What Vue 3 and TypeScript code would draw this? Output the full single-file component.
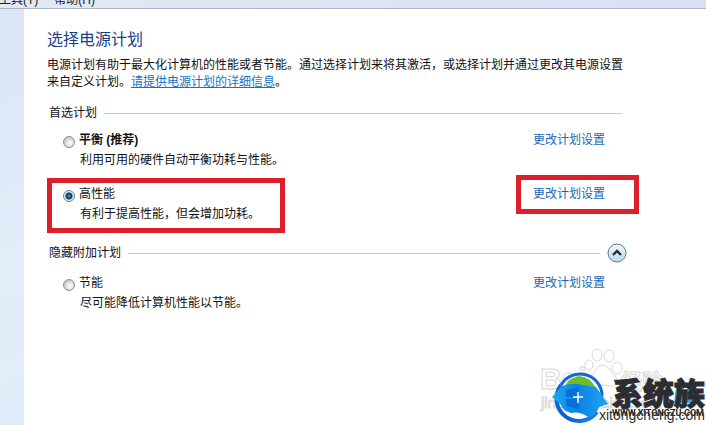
<script setup lang="ts">
import { ref } from 'vue'

interface Plan {
  id: string
  name: string
  detail: string
  strong?: boolean
  marked?: boolean
}

const preferred: Plan[] = [
  { id: 'balanced', name: '平衡 (推荐)', detail: '利用可用的硬件自动平衡功耗与性能。', strong: true },
  { id: 'high', name: '高性能', detail: '有利于提高性能，但会增加功耗。', marked: true },
]
const additional: Plan[] = [{ id: 'saver', name: '节能', detail: '尽可能降低计算机性能以节能。' }]

const selected = ref('high')
const expanded = ref(true)
</script>

<template>
  <div class="window">
    <nav class="menubar">
      <a href="#tools">工具(T)</a>
      <a href="#help">帮助(H)</a>
    </nav>
    <div class="body">
      <aside class="side"></aside>
      <main class="content">
        <h1>选择电源计划</h1>
        <p class="intro">
          电源计划有助于最大化计算机的性能或者节能。通过选择计划来将其激活，或选择计划并通过更改其电源设置来自定义计划。<a href="#details">请提供电源计划的详细信息</a>。
        </p>

        <section>
          <div class="head first"><h2>首选计划</h2><span class="rule"></span></div>
          <div class="plans">
            <div v-for="p in preferred" :key="p.id" class="plan">
              <input :id="p.id" v-model="selected" type="radio" name="plan" :value="p.id" />
              <label :for="p.id" :class="{ strong: p.strong }">{{ p.name }}</label>
              <a class="change" href="#change">更改计划设置</a>
              <p class="detail">{{ p.detail }}</p>
              <template v-if="p.marked">
                <span class="mark mark-plan"></span>
                <span class="mark mark-link"></span>
              </template>
            </div>
          </div>
        </section>

        <section class="extra">
          <div class="head">
            <h2>隐藏附加计划</h2><span class="rule"></span>
            <button type="button" aria-label="隐藏附加计划" @click="expanded = !expanded">
              <svg viewBox="0 0 20 20" width="20" height="20">
                <defs>
                  <linearGradient id="knob" x1="0" y1="0" x2="0" y2="1">
                    <stop offset="0" stop-color="#f4fafd" />
                    <stop offset="0.5" stop-color="#d3e8f3" />
                    <stop offset="1" stop-color="#b4e0f2" />
                  </linearGradient>
                </defs>
                <circle cx="10" cy="10" r="9" fill="url(#knob)" stroke="#59798f" />
                <path d="M6 12 L10 8 L14 12" fill="none" stroke="#202c34" stroke-width="2.4" />
              </svg>
            </button>
          </div>
          <div v-if="expanded" class="plans">
            <div v-for="p in additional" :key="p.id" class="plan">
              <input :id="p.id" v-model="selected" type="radio" name="plan" :value="p.id" />
              <label :for="p.id">{{ p.name }}</label>
              <a class="change" href="#change">更改计划设置</a>
              <p class="detail">{{ p.detail }}</p>
            </div>
          </div>
        </section>
      </main>
    </div>

    <svg class="stamp" viewBox="0 0 170 82" width="170" height="82">
      <defs>
        <linearGradient id="ring" x1="0" y1="0" x2="1" y2="1">
          <stop offset="0" stop-color="#1767d8" />
          <stop offset="0.6" stop-color="#0a5bd4" />
          <stop offset="1" stop-color="#168ff0" />
        </linearGradient>
        <linearGradient id="fish" x1="0" y1="0" x2="1" y2="0">
          <stop offset="0" stop-color="#20a8ee" />
          <stop offset="0.45" stop-color="#0b83e4" />
          <stop offset="1" stop-color="#1fa5f2" />
        </linearGradient>
      </defs>
      <g class="ghost">
        <text x="4" y="46" class="ghost-big">Bai</text>
        <text x="85" y="46" class="ghost-cjk">经验</text>
        <text x="5" y="65" class="ghost-small">jingyan.baidu.com</text>
        <ellipse cx="53" cy="22" rx="4" ry="5" />
        <ellipse cx="61" cy="12" rx="5" ry="6" />
        <ellipse cx="73" cy="13" rx="5" ry="6" />
        <ellipse cx="81" cy="25" rx="5" ry="6" />
        <path d="M66 22 C60 22 60 29 55 33 C49 39 54 45 61 43 C66 42 69 42 74 43 C81 44 84 38 79 33 C73 28 73 22 66 22 Z" />
      </g>
      <path d="M25 42 A22 22 0 1 0 61 69" fill="none" stroke="url(#ring)" stroke-width="4" />
      <path d="M25 42 A22 22 0 0 1 66 51 L65 60" fill="none" stroke="#0f68da" stroke-width="3" />
      <path d="M29 43 Q33 35 43 33 Q54 34 60 45 L45 43 Z" fill="#70bb2b" />
      <path d="M16 54 L26 43 Q37 39 47 42 L60 44 Q67 54 72 61 L63 64 Q60 73 52 74 Q44 68 35 70 Q26 67 25 62 Z" fill="url(#fish)" />
      <path d="M30 47 L43 44 V54 H30 Z M30 56 H43 V66 L30 63 Z" fill="#0870dd" />
      <path d="M37 54 H47 M42 49 V60" stroke="#fff" stroke-width="1.5" fill="none" />
      <path d="M141 37 H148 V60 H138 Z M149 46 H160 L157 60 H148 Z" fill="#3aa5e4" />
      <text x="76" y="62" class="brand">系统族</text>
      <text x="76" y="73" class="site">WWW.XITONGZU.COM</text>
      <text x="63" y="77" class="domain">xitongcheng.com</text>
    </svg>
  </div>
</template>

<style>
body {
  margin: 0;
  background: #fff;
}
html,
body,
#app {
  height: 100%;
}
</style>

<style scoped>
.window {
  position: relative;
  display: flex;
  flex-direction: column;
  min-height: 100%;
  overflow: hidden;
  background: #fff;
  color: #111;
  font: 12px/20px "Liberation Sans", "Noto Sans CJK SC", sans-serif;
}
.menubar {
  display: flex;
  align-items: flex-end;
  gap: 16px;
  height: 8px;
  overflow: hidden;
  border-bottom: 1px solid #abb5c8;
  background: linear-gradient(90deg, #e2e8f4, #dcdff2);
}
.menubar a {
  flex: none;
  margin-bottom: -2px;
  color: #222;
  line-height: 20px;
  text-decoration: none;
}
.menubar a:first-child {
  margin-left: -1px;
}
.body {
  display: flex;
  flex: 1;
}
.side {
  flex: none;
  width: 24px;
  background: linear-gradient(165deg, #dbe5f4, #dfe8f6 30%, #e3ecf9 60%, #e1ecfa);
}
.content {
  flex: 1;
  padding: 19px 79px 24px 23px;
}
h1,
h2,
p {
  margin: 0;
  font-weight: 400;
}
h1 {
  color: #173f8a;
  font-size: 16px;
  line-height: 24px;
}
.intro {
  margin-top: 5px;
  line-height: 17px;
}
.intro a {
  color: #1473c8;
}
.head {
  display: flex;
  align-items: center;
  gap: 7px;
  height: 20px;
  margin-top: 12px;
  padding-left: 2px;
}
h2 {
  font-size: 12px;
}
.rule {
  flex: 1;
  height: 1px;
  background: #c9c9c9;
}
.first {
  padding-right: 5px;
}
.extra .head {
  margin-top: 19px;
}
.head button {
  width: 20px;
  height: 20px;
  padding: 0;
  border: 0;
  background: none;
}
.head svg {
  display: block;
}
.plans {
  display: grid;
  gap: 14px;
  margin-top: 7px;
}
.extra .plans {
  margin-top: 10px;
}
.plan {
  position: relative;
  display: grid;
  grid-template-columns: 12px 1fr 94px;
  column-gap: 4px;
  align-items: center;
  padding-left: 16px;
}
input {
  appearance: none;
  box-sizing: border-box;
  width: 12px;
  height: 12px;
  margin: 4px 0 0;
  border: 1px solid #8e8f8f;
  border-radius: 50%;
  background: radial-gradient(circle at 60% 60%, #f4f4f4 20%, #c9cbcc 65%);
}
input:checked {
  border-color: #6f8190;
  background: radial-gradient(circle, #4fb6dc 0, #14496b 2px, #143f60 3px, #d6e0e6 4px, #eef3f5 5px);
}
.strong {
  font-weight: 700;
}
.change {
  color: #1769b5;
  text-decoration: none;
}
.detail {
  grid-column: 2;
  padding-left: 1px;
}
.mark {
  position: absolute;
  box-sizing: border-box;
  border: 5px solid #dc1f2a;
  pointer-events: none;
}
.mark-plan {
  top: -6px;
  left: 0;
  width: 238px;
  height: 55px;
}
.mark-link {
  top: -9px;
  right: -12px;
  width: 123px;
  height: 39px;
}
.stamp {
  position: absolute;
  right: 0;
  bottom: 0;
}
.ghost {
  fill: #fff;
  stroke: #d8d8d8;
  stroke-width: 1;
}
.ghost-big {
  font: 700 30px "Liberation Sans", sans-serif;
}
.ghost-cjk {
  font: 700 21px "Noto Sans CJK SC", sans-serif;
}
.ghost-small {
  font: 15px "Liberation Sans", sans-serif;
}
.brand {
  fill: #2b2d31;
  stroke: #2b2d31;
  stroke-width: 1;
  font: 900 31px "Noto Sans CJK SC", sans-serif;
}
.site {
  fill: #222;
  font: 700 9px Roboto, sans-serif;
}
.domain {
  fill: #333;
  font: 14px "Liberation Sans", sans-serif;
}
</style>
